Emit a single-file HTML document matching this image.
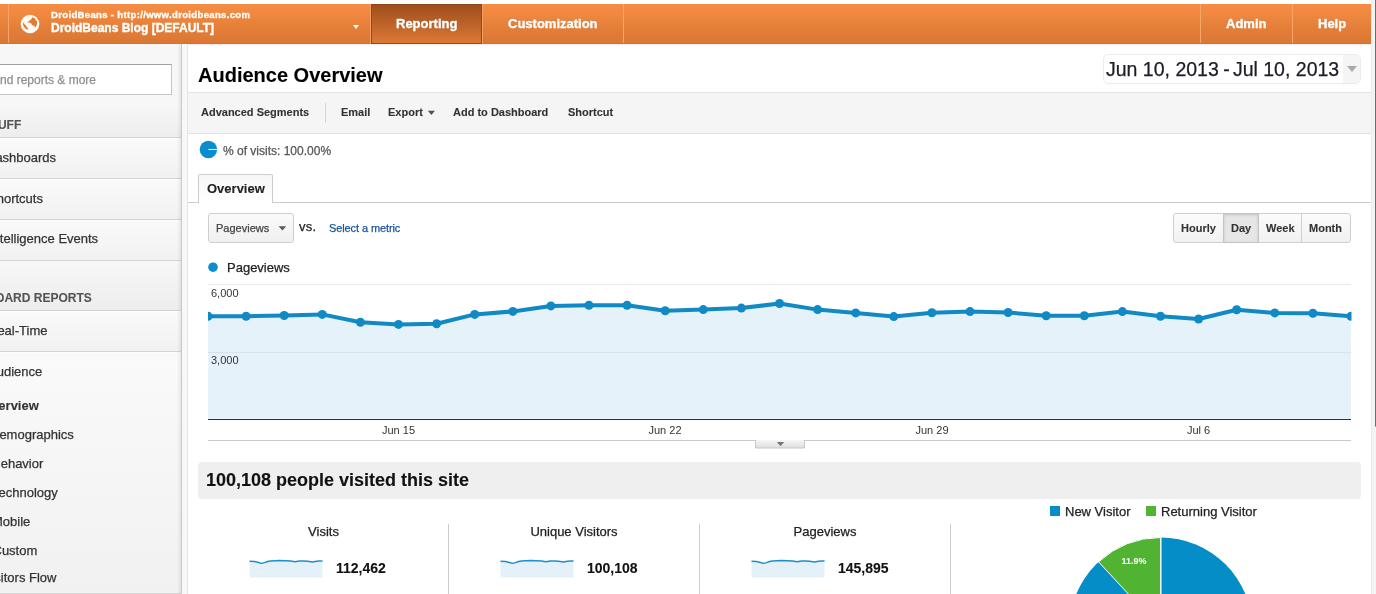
<!DOCTYPE html>
<html><head><meta charset="utf-8"><title>Audience Overview - Google Analytics</title>
<style>
*{box-sizing:border-box;margin:0;padding:0}
html,body{width:1376px;height:594px;overflow:hidden;background:#fff}
body{font-family:"Liberation Sans",sans-serif;color:#222;position:relative;font-size:13px}
.abs{position:absolute;white-space:nowrap}
#edge1{left:1371px;top:0;width:5px;height:594px;background:linear-gradient(90deg,#e9e9e9 0,#f2f2f2 30%,#f6f6f6 100%)}
#edge2{left:1375px;top:0;width:3px;height:427px;background:#6c6c6e;border-radius:0 0 2px 2px}
#hdr{left:0;top:4px;width:1371px;height:40px;background:linear-gradient(#f48c43 0,#f08840 25%,#e47f39 60%,#d97733 100%);border-bottom:1px solid #cd7434;box-shadow:0 1px 0 #ededed,0 2px 0 #fafafa;color:#fff;font-weight:bold}
.hsep{top:0;width:1px;height:39px;background:#f6a668}
#rep{left:371px;top:0;width:111px;height:40px;background:linear-gradient(#9f4f1d 0,#bd6229 50%,#dc7934 100%);border:1px solid #904a1b;border-top-color:#8c4517;box-shadow:-1px 0 0 #f3a064,1px 0 0 #f3a064}
.htx{font-size:13px;top:12px;text-shadow:0 -1px 0 rgba(0,0,0,.15)}
#side{left:0;top:44px;width:182px;height:550px;background:#f7f7f7;border-right:1px solid #c9c9c9;border-bottom:1px solid #d5d5d5;overflow:hidden}
#gut{left:182px;top:44px;width:6px;height:550px;background:#f8f8f8;border-right:1px solid #e6e6e6}
.sec{left:0;width:181px;border-bottom:1px solid #d4d4d4;background:linear-gradient(#fafafa,#f1f1f1);box-shadow:inset 0 1px 0 #fdfdfd}
.st{font-size:13px;color:#333}
.sh{font-size:12px;font-weight:bold;color:#555}
.tb{top:106px;font-size:11px;font-weight:bold;color:#333}
.bt{top:222px;font-size:11px;font-weight:bold;color:#333}
.vs{top:524px;width:1px;height:70px;background:#ccc}
.sl{top:524px;text-align:center;font-size:13px;color:#222}
.sv{top:560px;font-size:14px;font-weight:bold;color:#111}
[style*="font-weight:bold"],.tb,.bt,.sv,.sh{-webkit-text-stroke:.1px}
#hdr,#hdr div{-webkit-text-stroke:.35px}
#wrap{-webkit-text-stroke:.25px;position:absolute;left:0;top:0;width:1376px;height:594px;will-change:transform}
</style></head><body><div id="wrap">
<div class="abs" id="edge1"></div><div class="abs" id="edge2"></div>

<div class="abs" id="hdr">
  <div class="abs hsep" style="left:8px"></div>
  <svg class="abs" style="left:20px;top:10px" width="20" height="20" viewBox="0 0 20 20"><circle cx="10" cy="10" r="9.3" fill="#fffaf4"/><path d="M7.30,8.30 L9.10,7.30 L9.70,6.10 L11.30,5.50 L12.10,3.05 L13.35,4.06 L14.60,4.06 L15.80,5.90 L17.00,7.50 L17.00,10.10 L15.80,13.60 L14.20,11.90 L12.10,10.90 L11.30,9.50 L9.70,8.50 L8.10,8.70Z M3.05,8.30 L4.06,9.70 L6.10,11.70 L7.70,14.20 L8.70,15.60 L6.70,15.40 L4.90,14.00 L3.45,12.10 L2.85,10.10Z" fill="#e07b36"/></svg>
  <div class="abs" style="left:51px;top:5px;font-size:9.5px;letter-spacing:.35px">DroidBeans - http://www.droidbeans.com</div>
  <div class="abs" style="left:51px;top:17px;font-size:12px">DroidBeans Blog [DEFAULT]</div>
  <div class="abs" style="left:353px;top:21px;border:3.5px solid transparent;border-top:4px solid #fff;border-bottom:0"></div>
  <div class="abs" id="rep"></div>
  <div class="abs htx" style="left:396px">Reporting</div>
  <div class="abs htx" style="left:508px">Customization</div>
  <div class="abs hsep" style="left:623px"></div>
  <div class="abs hsep" style="left:1200px"></div>
  <div class="abs htx" style="left:1226px">Admin</div>
  <div class="abs hsep" style="left:1292px"></div>
  <div class="abs htx" style="left:1318px">Help</div>
</div>

<div class="abs" id="side">
  <div class="abs" style="left:-20px;top:20px;width:192px;height:31px;background:#fff;border:1px solid #c4c4c4;border-top-color:#a2a2a2"></div>
  <div class="abs" style="left:-10px;top:29px;font-size:12px;color:#8f8f8f">Find reports &amp; more</div>
  <div class="abs sec" style="top:60px;height:34px;background:linear-gradient(#f7f7f7,#ededed);box-shadow:none"></div>
  <div class="abs sh" style="left:-38.5px;top:74px">MY STUFF</div>
  <div class="abs sec" style="top:94px;height:41px"></div>
  <div class="abs st" style="left:-14px;top:106px">Dashboards</div>
  <div class="abs sec" style="top:135px;height:41px"></div>
  <div class="abs st" style="left:-12px;top:147px">Shortcuts</div>
  <div class="abs sec" style="top:176px;height:41px"></div>
  <div class="abs st" style="left:-11px;top:187px">Intelligence Events</div>
  <div class="abs sec" style="top:217px;height:50px;background:linear-gradient(#f7f7f7,#ededed);box-shadow:none"></div>
  <div class="abs sh" style="left:-36px;top:247px">STANDARD REPORTS</div>
  <div class="abs sec" style="top:267px;height:41px"></div>
  <div class="abs st" style="left:-12px;top:279px">Real-Time</div>
  <div class="abs sec" style="top:308px;height:242px;border-bottom:0"></div>
  <div class="abs st" style="left:-12px;top:320px">Audience</div>
  <div class="abs st" style="left:-19px;top:354px;font-weight:bold">Overview</div>
  <div class="abs st" style="left:-10px;top:383px">Demographics</div>
  <div class="abs st" style="left:-8px;top:412px">Behavior</div>
  <div class="abs st" style="left:-8px;top:441px">Technology</div>
  <div class="abs st" style="left:-8px;top:470px">Mobile</div>
  <div class="abs st" style="left:-7.5px;top:499px">Custom</div>
  <div class="abs st" style="left:-17px;top:526px">Visitors Flow</div>
</div>
<div class="abs" style="left:177px;top:44px;width:4px;height:550px;background:linear-gradient(90deg,rgba(0,0,0,0),rgba(0,0,0,.07))"></div><div class="abs" id="gut"></div>


<div class="abs" style="left:198px;top:64px;font-size:20px;font-weight:bold;color:#000">Audience Overview</div>
<div class="abs" style="left:1103px;top:54px;width:258px;height:30px;border:1px solid #ebebeb;border-radius:5px;background:#fff;overflow:hidden"><div class="abs" style="left:239px;top:0;width:18px;height:28px;background:#f5f5f5"></div></div>
<div class="abs" style="left:1106px;top:58px;font-size:19.5px;color:#1c1c28">Jun 10, 2013<span style="margin:0 -2.2px 0 -1px"> - </span>Jul 10, 2013</div>
<div class="abs" style="left:1347px;top:66px;border:5px solid transparent;border-top:6px solid #aaa;border-bottom:0"></div>
<div class="abs" style="left:188px;top:92px;width:1183px;height:42px;background:#f5f5f5;border-top:1px solid #e3e3e3;border-bottom:1px solid #e3e3e3"></div>
<div class="abs tb" style="left:201px">Advanced Segments</div>
<div class="abs" style="left:325px;top:103px;width:1px;height:20px;background:#d5d5d5"></div>
<div class="abs tb" style="left:341px">Email</div>
<div class="abs tb" style="left:388px">Export</div>
<svg class="abs" style="left:427px;top:110px" width="10" height="7"><path d="M0.8,0.8 h7.2 l-3.6,4.3z" fill="#555"/></svg>
<div class="abs tb" style="left:453px">Add to Dashboard</div>
<div class="abs tb" style="left:568px">Shortcut</div>
<svg class="abs" style="left:198px;top:139px" width="21" height="21" viewBox="0 0 21 21"><circle cx="10.4" cy="10.5" r="8.7" fill="#0a8cce"/><line x1="10.4" y1="10.5" x2="19.1" y2="10.5" stroke="#fff" stroke-width="1"/></svg>
<div class="abs" style="left:223px;top:144px;font-size:12px;color:#555">% of visits: 100.00%</div>
<div class="abs" style="left:188px;top:202px;width:1183px;height:1px;background:#ccc"></div>
<div class="abs" style="left:198px;top:174px;width:75px;height:29px;border:1px solid #ccc;border-bottom:0;border-radius:2px 2px 0 0;background:linear-gradient(#f6f6f6,#fff)"></div>
<div class="abs" style="left:207px;top:181px;font-size:13px;font-weight:bold;color:#222">Overview</div>
<div class="abs" style="left:208px;top:213px;width:86px;height:30px;border:1px solid #cfcfcf;border-radius:3px;background:linear-gradient(#fafafa,#f0f0f0)"></div>
<div class="abs" style="left:216px;top:222px;font-size:11px;color:#444">Pageviews</div>
<svg class="abs" style="left:278px;top:225px" width="10" height="7"><path d="M0.6,1.2 h7.6 l-3.8,4.2z" fill="#5a5a5a"/></svg>
<div class="abs" style="left:299px;top:219px;font-size:13px;color:#222;letter-spacing:.3px">vs.</div>
<div class="abs" style="left:329px;top:222px;font-size:11px;letter-spacing:-.1px;color:#15549c">Select a metric</div>
<div class="abs" style="left:1173px;top:213px;width:178px;height:30px;border:1px solid #cfcfcf;border-radius:3px;background:linear-gradient(#fbfbfb,#f1f1f1)"></div>
<div class="abs" style="left:1223px;top:213px;width:36px;height:30px;border:1px solid #c4c4c4;background:#e6e6e6;box-shadow:inset 0 1px 3px rgba(0,0,0,.15)"></div>
<div class="abs" style="left:1301px;top:214px;width:1px;height:28px;background:#cfcfcf"></div>
<div class="abs bt" style="left:1181px">Hourly</div>
<div class="abs bt" style="left:1231px">Day</div>
<div class="abs bt" style="left:1266px">Week</div>
<div class="abs bt" style="left:1309px">Month</div>
<svg class="abs" style="left:207px;top:261px" width="12" height="12"><circle cx="6" cy="6.2" r="4.8" fill="#0a8cce"/></svg>
<div class="abs" style="left:227px;top:260px;font-size:13px;color:#222">Pageviews</div>
<svg class="abs" style="left:0;top:0" width="1376" height="594" viewBox="0 0 1376 594">
<defs><clipPath id="cc"><rect x="208" y="280" width="1143.5" height="145"/></clipPath><linearGradient id="hg" x1="0" y1="0" x2="0" y2="1"><stop offset="0" stop-color="#f6f6f6"/><stop offset="1" stop-color="#dedede"/></linearGradient></defs>
<line x1="208" x2="1351" y1="284.5" y2="284.5" stroke="#e9e9e9"/>
<path d="M208,419.5 L208.0,316.2 L246.1,316.2 L284.2,315.5 L322.3,314.4 L360.4,322.3 L398.5,324.4 L436.6,323.8 L474.7,314.4 L512.8,311.4 L550.9,305.9 L589.0,305.3 L627.1,305.3 L665.2,310.7 L703.3,309.6 L741.4,308.1 L779.5,303.5 L817.6,309.6 L855.7,312.9 L893.8,316.6 L931.9,312.7 L970.0,311.6 L1008.1,312.5 L1046.2,315.7 L1084.3,315.7 L1122.4,311.6 L1160.5,316.2 L1198.6,319.0 L1236.7,309.8 L1274.8,312.9 L1312.9,313.3 L1351.0,316.2 L1351,419.5Z" fill="#e6f2f9"/>
<line x1="208" x2="1351" y1="352.5" y2="352.5" stroke="#d4dde2" stroke-opacity=".8"/>
<g clip-path="url(#cc)"><polyline points="208.0,316.2 246.1,316.2 284.2,315.5 322.3,314.4 360.4,322.3 398.5,324.4 436.6,323.8 474.7,314.4 512.8,311.4 550.9,305.9 589.0,305.3 627.1,305.3 665.2,310.7 703.3,309.6 741.4,308.1 779.5,303.5 817.6,309.6 855.7,312.9 893.8,316.6 931.9,312.7 970.0,311.6 1008.1,312.5 1046.2,315.7 1084.3,315.7 1122.4,311.6 1160.5,316.2 1198.6,319.0 1236.7,309.8 1274.8,312.9 1312.9,313.3 1351.0,316.2" fill="none" stroke="#1089c5" stroke-width="4" stroke-linejoin="round"/>
<g fill="#1089c5"><circle cx="208.0" cy="316.2" r="4.5"/><circle cx="246.1" cy="316.2" r="4.5"/><circle cx="284.2" cy="315.5" r="4.5"/><circle cx="322.3" cy="314.4" r="4.5"/><circle cx="360.4" cy="322.3" r="4.5"/><circle cx="398.5" cy="324.4" r="4.5"/><circle cx="436.6" cy="323.8" r="4.5"/><circle cx="474.7" cy="314.4" r="4.5"/><circle cx="512.8" cy="311.4" r="4.5"/><circle cx="550.9" cy="305.9" r="4.5"/><circle cx="589.0" cy="305.3" r="4.5"/><circle cx="627.1" cy="305.3" r="4.5"/><circle cx="665.2" cy="310.7" r="4.5"/><circle cx="703.3" cy="309.6" r="4.5"/><circle cx="741.4" cy="308.1" r="4.5"/><circle cx="779.5" cy="303.5" r="4.5"/><circle cx="817.6" cy="309.6" r="4.5"/><circle cx="855.7" cy="312.9" r="4.5"/><circle cx="893.8" cy="316.6" r="4.5"/><circle cx="931.9" cy="312.7" r="4.5"/><circle cx="970.0" cy="311.6" r="4.5"/><circle cx="1008.1" cy="312.5" r="4.5"/><circle cx="1046.2" cy="315.7" r="4.5"/><circle cx="1084.3" cy="315.7" r="4.5"/><circle cx="1122.4" cy="311.6" r="4.5"/><circle cx="1160.5" cy="316.2" r="4.5"/><circle cx="1198.6" cy="319.0" r="4.5"/><circle cx="1236.7" cy="309.8" r="4.5"/><circle cx="1274.8" cy="312.9" r="4.5"/><circle cx="1312.9" cy="313.3" r="4.5"/><circle cx="1351.0" cy="316.2" r="4.5"/></g></g>
<line x1="208" x2="1351" y1="419.5" y2="419.5" stroke="#333"/>
<line x1="208" x2="1351" y1="440.5" y2="440.5" stroke="#cacaca"/>
<g font-size="11" fill="#333" font-family="Liberation Sans, sans-serif">
<text x="211" y="297">6,000</text><text x="211" y="364">3,000</text>
<text x="398.5" y="434" text-anchor="middle">Jun 15</text><text x="665" y="434" text-anchor="middle">Jun 22</text>
<text x="932" y="434" text-anchor="middle">Jun 29</text><text x="1198.5" y="434" text-anchor="middle">Jul 6</text>
</g>
<rect x="755" y="440" width="50" height="8" fill="url(#hg)"/><path d="M755.5,440 V448 H804.5 V440" fill="none" stroke="#c8c8c8"/>
<path d="M776.8,442 h7.4 l-3.7,4.2z" fill="#777"/>
</svg>
<div class="abs" style="left:198px;top:462px;width:1163px;height:37px;background:#efefef;border-radius:4px"></div>
<div class="abs" style="left:206px;top:470px;font-size:18px;font-weight:bold;color:#111">100,108 people visited this site</div>
<div class="abs vs" style="left:448px"></div><div class="abs vs" style="left:699px"></div><div class="abs vs" style="left:950px"></div>
<div class="abs sl" style="left:223.5px;width:200px">Visits</div>
<div class="abs sl" style="left:474px;width:200px">Unique Visitors</div>
<div class="abs sl" style="left:725px;width:200px">Pageviews</div>
<svg class="abs" style="left:0;top:0" width="1376" height="594" viewBox="0 0 1376 594"><path d="M249.5,561.3 L254.5,561.6 L258.5,562.6 L261.5,563.4 L264.5,562.6 L267.5,561.5 L270.5,560.9 L279.5,560.6 L285.5,560.7 L290.5,561.1 L295.0,561.8 L299.5,561.1 L303.5,560.9 L307.5,561.3 L312.5,561.9 L316.5,561.3 L319.5,560.9 L322.5,560.9 L322.5,577.5 L249.5,577.5Z" fill="#e5f1f8"/><path d="M249.5,561.3 L254.5,561.6 L258.5,562.6 L261.5,563.4 L264.5,562.6 L267.5,561.5 L270.5,560.9 L279.5,560.6 L285.5,560.7 L290.5,561.1 L295.0,561.8 L299.5,561.1 L303.5,560.9 L307.5,561.3 L312.5,561.9 L316.5,561.3 L319.5,560.9 L322.5,560.9" fill="none" stroke="#1c90cc" stroke-width="1.5" stroke-linejoin="round"/><path d="M500.5,561.3 L505.5,561.6 L509.5,562.6 L512.5,563.4 L515.5,562.6 L518.5,561.5 L521.5,560.9 L530.5,560.6 L536.5,560.7 L541.5,561.1 L546.0,561.8 L550.5,561.1 L554.5,560.9 L558.5,561.3 L563.5,561.9 L567.5,561.3 L570.5,560.9 L573.5,560.9 L573.5,577.5 L500.5,577.5Z" fill="#e5f1f8"/><path d="M500.5,561.3 L505.5,561.6 L509.5,562.6 L512.5,563.4 L515.5,562.6 L518.5,561.5 L521.5,560.9 L530.5,560.6 L536.5,560.7 L541.5,561.1 L546.0,561.8 L550.5,561.1 L554.5,560.9 L558.5,561.3 L563.5,561.9 L567.5,561.3 L570.5,560.9 L573.5,560.9" fill="none" stroke="#1c90cc" stroke-width="1.5" stroke-linejoin="round"/><path d="M751.5,561.3 L756.5,561.6 L760.5,562.6 L763.5,563.4 L766.5,562.6 L769.5,561.5 L772.5,560.9 L781.5,560.6 L787.5,560.7 L792.5,561.1 L797.0,561.8 L801.5,561.1 L805.5,560.9 L809.5,561.3 L814.5,561.9 L818.5,561.3 L821.5,560.9 L824.5,560.9 L824.5,577.5 L751.5,577.5Z" fill="#e5f1f8"/><path d="M751.5,561.3 L756.5,561.6 L760.5,562.6 L763.5,563.4 L766.5,562.6 L769.5,561.5 L772.5,560.9 L781.5,560.6 L787.5,560.7 L792.5,561.1 L797.0,561.8 L801.5,561.1 L805.5,560.9 L809.5,561.3 L814.5,561.9 L818.5,561.3 L821.5,560.9 L824.5,560.9" fill="none" stroke="#1c90cc" stroke-width="1.5" stroke-linejoin="round"/></svg>
<div class="abs sv" style="left:336px">112,462</div>
<div class="abs sv" style="left:587px">100,108</div>
<div class="abs sv" style="left:838px">145,895</div>
<div class="abs" style="left:1050px;top:506px;width:10px;height:10px;background:#058dc7"></div>
<div class="abs" style="left:1065px;top:504px;font-size:13px;color:#222">New Visitor</div>
<div class="abs" style="left:1146px;top:506px;width:10px;height:10px;background:#50b432"></div>
<div class="abs" style="left:1161px;top:504px;font-size:13px;color:#222">Returning Visitor</div>
<svg class="abs" style="left:0;top:0" width="1376" height="594" viewBox="0 0 1376 594">
<circle cx="1160.8" cy="629" r="91.5" fill="#058dc7"/>
<path d="M1160.8,629 L1098.6,561.9 A91.5,91.5 0 0 1 1160.8,537.5Z" fill="#50b432" stroke="#fff" stroke-width="1"/>
<line x1="1160.8" y1="629" x2="1160.8" y2="537.5" stroke="#fff"/>
<text x="1134" y="564" font-size="9" font-weight="bold" fill="#fff" text-anchor="middle" font-family="Liberation Sans, sans-serif">11.9%</text>
</svg>

</div></body></html>
